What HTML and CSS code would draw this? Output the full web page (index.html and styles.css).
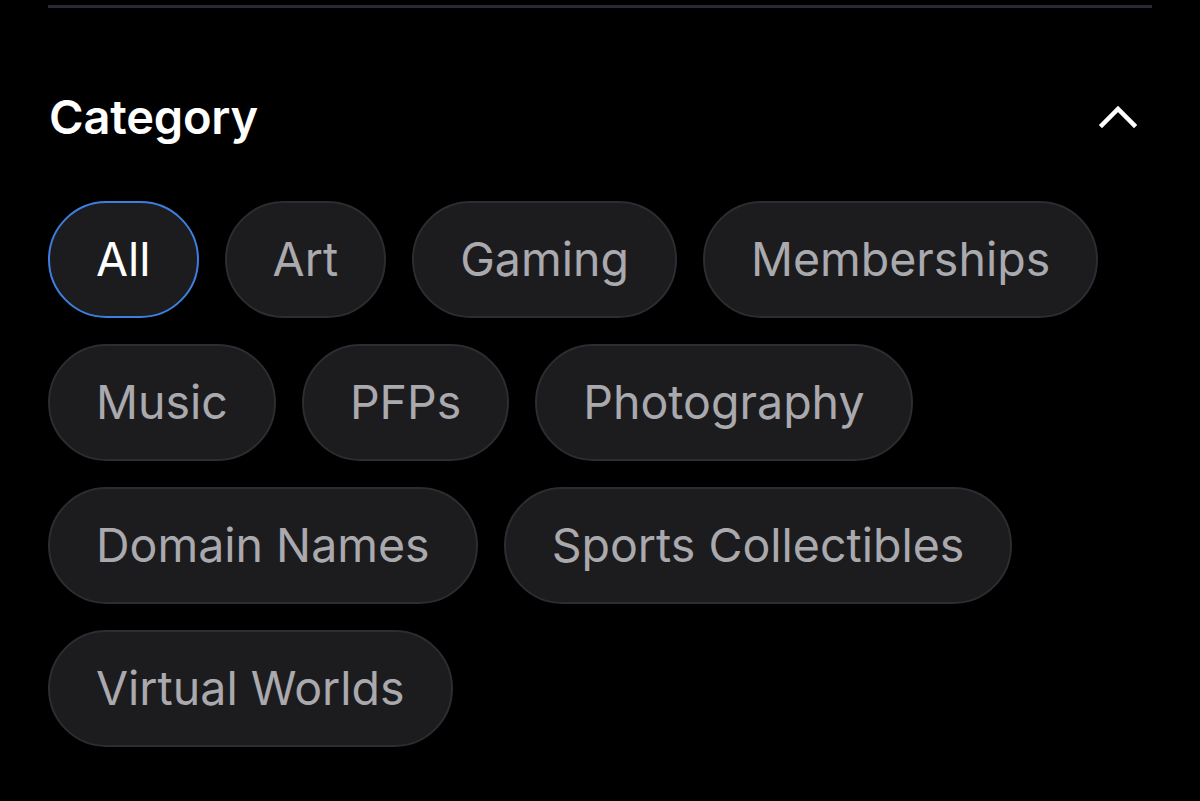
FILE: index.html
```html
<!DOCTYPE html>
<html lang="en">
<head>
<meta charset="UTF-8" />
<title>Category filter</title>
<meta name="viewport" content="width=device-width, initial-scale=1.0" />
<link rel="stylesheet" href="styles.css">
</head>
<body>

<div class="filter-panel">
  <hr class="divider" />

  <div class="filter-head">
    <h2>Category</h2>
    <button class="toggle" aria-label="Collapse">
      <svg width="38" height="24" viewBox="0 0 38 24">
        <path d="M3 21 L19 5 L35 21" fill="none" stroke="#fff" stroke-width="4.5" stroke-linecap="square" stroke-linejoin="miter" />
      </svg>
    </button>
  </div>

  <div class="chips">
    <button class="chip active">All</button>
    <button class="chip">Art</button>
    <button class="chip">Gaming</button>
    <button class="chip">Memberships</button>
    <button class="chip">Music</button>
    <button class="chip">PFPs</button>
    <button class="chip">Photography</button>
    <button class="chip">Domain Names</button>
    <button class="chip">Sports Collectibles</button>
    <button class="chip">Virtual Worlds</button>
  </div>
</div>

</body>
</html>
```

FILE: styles.css
```css
body {
  margin: 0;
  background: #000;
  color: #fff;
  font-family: Inter, "Noto Sans", Arial, sans-serif;
}

.filter-panel {
  padding: 0 48px;
}

.divider {
  margin: 5px 0 0;
  border: none;
  height: 3px;
  background: #2a2a33;
}

.filter-head {
  display: flex;
  align-items: center;
  justify-content: space-between;
  height: 190px;
}

.filter-head h2 {
  margin: 0 0 0 1px;
  font-size: 47px;
  font-weight: 600;
  letter-spacing: -0.2px;
  padding-top: 26px;
}

.toggle {
  background: none;
  border: none;
  padding: 0;
  margin-right: 15px;
  margin-top: 26px;
  cursor: pointer;
  display: flex;
}

/* chips */
.chips {
  display: flex;
  flex-wrap: wrap;
  gap: 26px 26px;
  margin-top: 3px;
}

.chip {
  height: 117px;
  padding: 0 46px 2px;
  border-radius: 60px;
  border: 2px solid #2c2c31;
  background: #1c1c1f;
  color: #a9a9ae;
  font-family: inherit;
  font-size: 46.5px;
  font-weight: 400;
  display: inline-flex;
  align-items: center;
  cursor: pointer;
}

.chip.active {
  border: 2px solid #3d7fe0;
  color: #fff;
}
```
